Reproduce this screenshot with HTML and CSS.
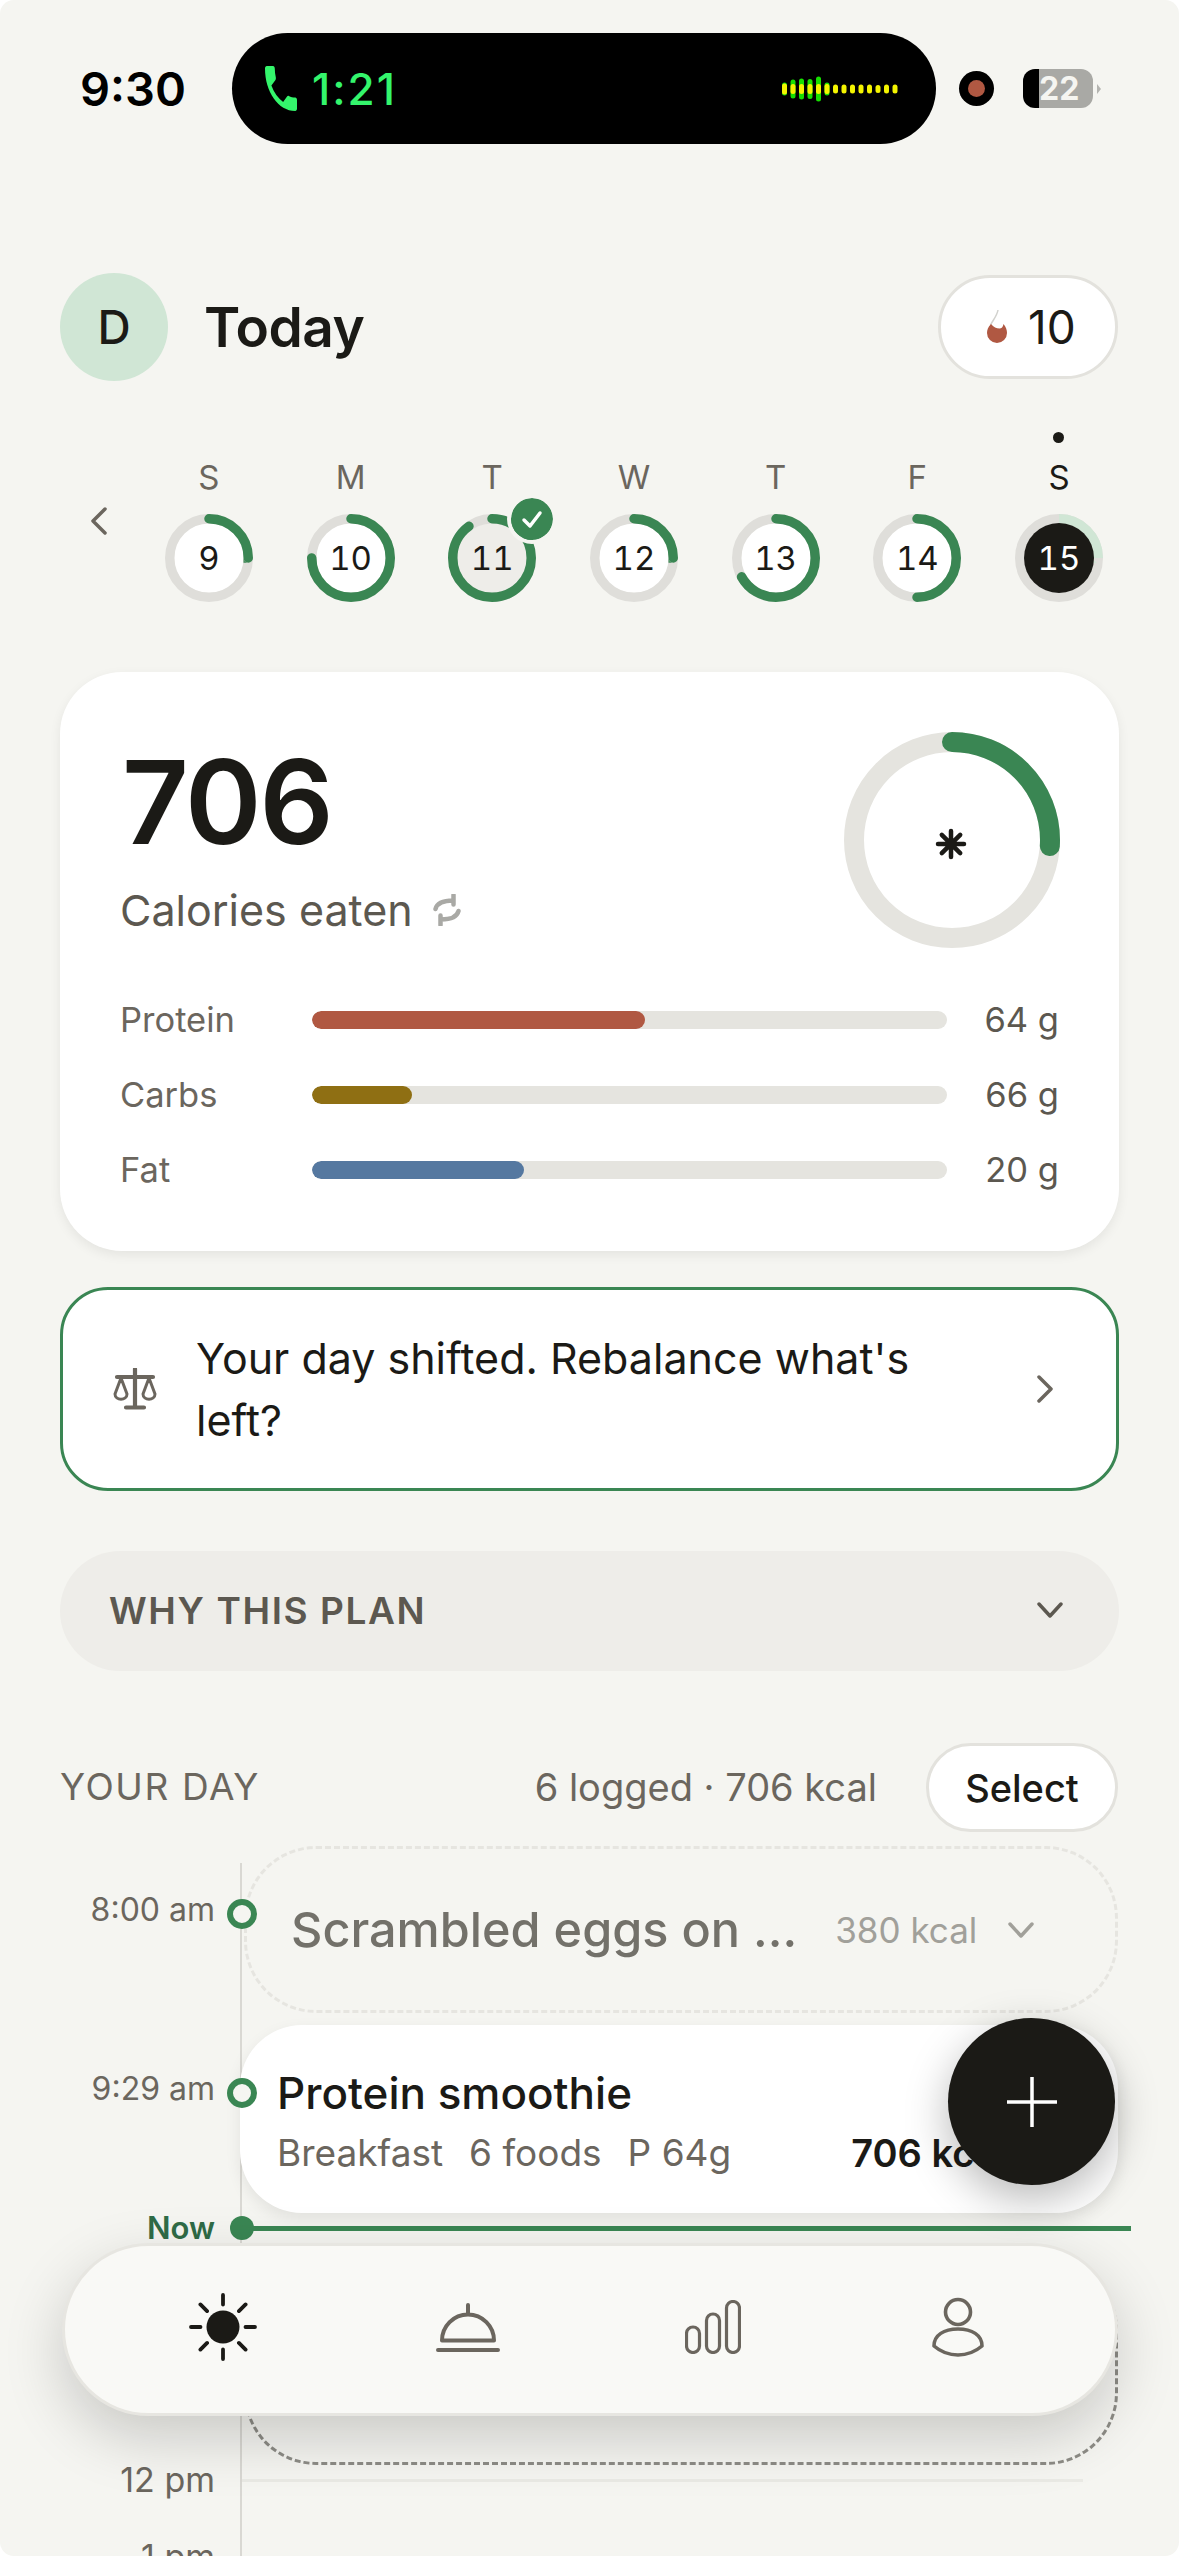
FILE: index.html
```html
<!DOCTYPE html>
<html lang="en">
  <head>
    <meta charset="utf-8">
    <title>Today</title>
    <link rel="stylesheet" href="styles.css">
  </head>
  <body>
    <div class="screen">

      <!-- Status bar -->
      <div class="status">
        <span class="status-time">9:30</span>
        <div class="island">
          <svg class="island-phone" viewBox="3 3 18 18" preserveAspectRatio="none"><path d="M6.6 10.8c1.4 2.8 3.8 5.1 6.6 6.6l2.2-2.2c.3-.3.7-.4 1-.2 1.1.4 2.3.6 3.6.6.6 0 1 .4 1 1V20c0 .6-.4 1-1 1C10.6 21 3 13.4 3 4c0-.6.4-1 1-1h3.5c.6 0 1 .4 1 1 0 1.2.2 2.4.6 3.6.1.3 0 .7-.2 1l-2.3 2.2z"/></svg>
          <span class="island-timer">1:21</span>
          <svg class="island-wave" viewBox="0 0 116 26">
            <g fill="#16e000">
              <rect x="0" y="6.5" width="5" height="13" rx="2.5"/>
              <rect x="8.5" y="3.5" width="5" height="19" rx="2.5"/>
              <rect x="17" y="2.500" width="5" height="21" rx="2.5"/>
              <rect x="25.500" y="3" width="5" height="20" rx="2.5"/>
              <rect x="34" y="0.500" width="5" height="25" rx="2.5"/>
              <rect x="42.500" y="6.500" width="5" height="13" rx="2.5"/>
            </g>
            <g fill="#f4f400">
              <rect x="0" y="7.500" width="5" height="11" rx="2.5"/>
              <rect x="8.500" y="8" width="5" height="10" rx="2.5"/>
              <rect x="17" y="8" width="5" height="10" rx="2.5"/>
              <rect x="25.500" y="8" width="5" height="10" rx="2.5"/>
              <rect x="34" y="8" width="5" height="10" rx="2.5"/>
              <rect x="42.500" y="8" width="5" height="10" rx="2.5"/>
              <rect x="51" y="8.500" width="5" height="9" rx="2.5"/>
              <rect x="59.500" y="8.500" width="5" height="9" rx="2.5"/>
              <rect x="68" y="8.500" width="5" height="9" rx="2.5"/>
              <rect x="76.500" y="8.500" width="5" height="9" rx="2.5"/>
              <rect x="85" y="8.500" width="5" height="9" rx="2.5"/>
              <rect x="93.500" y="9" width="5" height="8" rx="2.5"/>
              <rect x="102" y="8.500" width="5" height="9" rx="2.5"/>
              <rect x="110.500" y="8.500" width="5" height="9" rx="2.5"/>
            </g>
          </svg>
        </div>
        <span class="record-dot"></span>
        <div class="battery">
          <span class="battery-low"></span>
          <span class="battery-rest">22</span>
          <span class="battery-nub"></span>
        </div>
      </div>

      <!-- Header -->
      <header class="top">
        <div class="avatar">D</div>
        <h1 class="top-title">Today</h1>
        <div class="streak">
          <svg class="streak-flame" viewBox="0 0 24 36">
            <path d="M13 1C12 7 8 11 5.500 16" fill="none" stroke="#d2d2ce" stroke-width="1.500"/>
            <path d="M6 15C3 18 2 21 2 24a10 10 0 0 0 20 0c0-3-1-6-3.500-9-.5 3-2 4.500-4 4.500-3 0-6-1.500-8.500-4.500z" fill="#b05842"/>
          </svg>
          <span>10</span>
        </div>
      </header>

      <!-- Week -->
      <div class="week">
        <svg class="week-back" viewBox="0 0 18 28"><path d="M15 2 L3 14 L15 26"/></svg>
        <div class="week-days">
          <div class="day">
            <span class="day-dot"></span>
            <span class="day-letter">S</span>
            <div class="day-ring">
              <svg viewBox="0 0 88 88"><circle class="ring-face" cx="44" cy="44" r="35"/><circle class="ring-track" cx="44" cy="44" r="39.250"/><circle class="ring-fill" cx="44" cy="44" r="39.250" pathLength="100" stroke-dasharray="25 100"/></svg>
              <span class="day-num">9</span>
            </div>
          </div>
          <div class="day">
            <span class="day-dot"></span>
            <span class="day-letter">M</span>
            <div class="day-ring">
              <svg viewBox="0 0 88 88"><circle class="ring-face" cx="44" cy="44" r="35"/><circle class="ring-track" cx="44" cy="44" r="39.250"/><circle class="ring-fill" cx="44" cy="44" r="39.250" pathLength="100" stroke-dasharray="75 100"/></svg>
              <span class="day-num">10</span>
            </div>
          </div>
          <div class="day day-done">
            <span class="day-dot"></span>
            <span class="day-letter">T</span>
            <div class="day-ring">
              <svg viewBox="0 0 88 88"><circle class="ring-face" cx="44" cy="44" r="35"/><circle class="ring-track" cx="44" cy="44" r="39.250"/><circle class="ring-fill" cx="44" cy="44" r="39.250" pathLength="100" stroke-dasharray="90 100"/></svg>
              <span class="day-num">11</span>
              <svg class="day-check" viewBox="0 0 42 42"><circle cx="21" cy="21" r="21" fill="#3a8653"/><path d="M13 22 L19 28 L29 15" fill="none" stroke="#fff" stroke-width="3.500" stroke-linecap="round" stroke-linejoin="round"/></svg>
            </div>
          </div>
          <div class="day">
            <span class="day-dot"></span>
            <span class="day-letter">W</span>
            <div class="day-ring">
              <svg viewBox="0 0 88 88"><circle class="ring-face" cx="44" cy="44" r="35"/><circle class="ring-track" cx="44" cy="44" r="39.250"/><circle class="ring-fill" cx="44" cy="44" r="39.250" pathLength="100" stroke-dasharray="25 100"/></svg>
              <span class="day-num">12</span>
            </div>
          </div>
          <div class="day">
            <span class="day-dot"></span>
            <span class="day-letter">T</span>
            <div class="day-ring">
              <svg viewBox="0 0 88 88"><circle class="ring-face" cx="44" cy="44" r="35"/><circle class="ring-track" cx="44" cy="44" r="39.250"/><circle class="ring-fill" cx="44" cy="44" r="39.250" pathLength="100" stroke-dasharray="67 100"/></svg>
              <span class="day-num">13</span>
            </div>
          </div>
          <div class="day">
            <span class="day-dot"></span>
            <span class="day-letter">F</span>
            <div class="day-ring">
              <svg viewBox="0 0 88 88"><circle class="ring-face" cx="44" cy="44" r="35"/><circle class="ring-track" cx="44" cy="44" r="39.250"/><circle class="ring-fill" cx="44" cy="44" r="39.250" pathLength="100" stroke-dasharray="50 100"/></svg>
              <span class="day-num">14</span>
            </div>
          </div>
          <div class="day day-today">
            <span class="day-dot"></span>
            <span class="day-letter">S</span>
            <div class="day-ring">
              <svg viewBox="0 0 88 88"><circle class="ring-track" cx="44" cy="44" r="39.250"/><circle class="ring-fill" cx="44" cy="44" r="39.250" pathLength="100" stroke-dasharray="25 100"/><circle class="ring-face" cx="44" cy="44" r="35"/></svg>
              <span class="day-num">15</span>
            </div>
          </div>
        </div>
      </div>

      <!-- Calories card -->
      <section class="summary">
        <div class="summary-top">
          <div>
            <div class="summary-value">706</div>
            <div class="summary-label">
              Calories eaten
              <svg class="summary-sync" viewBox="0 0 30 32"><path d="M3.500 15C5 9 10 6.500 21 6.500M21.500 1V10.500M26.500 17C25 23 20 25.500 9 25.500M8.500 31V21.500"/></svg>
            </div>
          </div>
          <svg class="summary-ring" viewBox="0 0 216 216">
            <circle class="big-track" cx="108" cy="108" r="98"/>
            <circle class="big-fill" cx="108" cy="108" r="98" pathLength="100" stroke-dasharray="26 100"/>
            <g class="big-star">
              <path d="M107 99V125M94 112H120M97.800 102.800L116.200 121.200M116.200 102.800L97.800 121.200"/>
            </g>
          </svg>
        </div>
        <div class="macros">
          <div class="macro">
            <span class="macro-name">Protein</span>
            <div class="macro-bar"><div class="macro-fill fill-protein" style="width: 52.500%"></div></div>
            <span class="macro-value">64 g</span>
          </div>
          <div class="macro">
            <span class="macro-name">Carbs</span>
            <div class="macro-bar"><div class="macro-fill fill-carbs" style="width: 15.800%"></div></div>
            <span class="macro-value">66 g</span>
          </div>
          <div class="macro">
            <span class="macro-name">Fat</span>
            <div class="macro-bar"><div class="macro-fill fill-fat" style="width: 33.400%"></div></div>
            <span class="macro-value">20 g</span>
          </div>
        </div>
      </section>

      <!-- Rebalance -->
      <div class="banner">
        <svg class="banner-icon" viewBox="0 0 46 42">
          <path d="M23 1V39M5 9H41M14 39.500H32" stroke-width="4.200"/>
          <path d="M9 10L3 26C3 33 15 33 15 26ZM37 10L31 26C31 33 43 33 43 26Z" stroke-width="3"/>
        </svg>
        <p class="banner-text">Your day shifted. Rebalance what's left?</p>
        <svg class="banner-arrow" viewBox="0 0 18 28"><path d="M3 2 L15 14 L3 26"/></svg>
      </div>

      <div class="why">
        <span>WHY THIS PLAN</span>
        <svg class="why-arrow" viewBox="0 0 26 16"><path d="M2 2 L13 14 L24 2"/></svg>
      </div>

      <!-- Your day -->
      <div class="day-head">
        <span class="day-head-title">YOUR DAY</span>
        <span class="day-head-meta">6 logged · 706 kcal</span>
        <button class="select-btn">Select</button>
      </div>

      <div class="timeline">
        <div class="tl-row">
          <div class="tl-time"><span>8:00 am</span><i class="tl-dot"></i></div>
          <div class="ghost">
            <span class="ghost-name">Scrambled eggs on ...</span>
            <span class="ghost-kcal">380 kcal</span>
            <svg class="ghost-arrow" viewBox="0 0 26 16"><path d="M2 2 L13 14 L24 2"/></svg>
          </div>
        </div>

        <div class="tl-row tl-row-meal">
          <div class="tl-time"><span>9:29 am</span><i class="tl-dot"></i></div>
          <div class="meal">
            <div class="meal-name">Protein smoothie</div>
            <div class="meal-sub">
              <div class="meal-tags"><span>Breakfast</span><span>6 foods</span><span>P 64g</span></div>
              <strong class="meal-kcal">706 kcal</strong>
            </div>
          </div>
        </div>

        <div class="now">
          <span class="now-label">Now</span>
          <i class="now-dot"></i>
          <span class="now-line"></span>
        </div>

        <div class="planned"></div>

        <div class="hour"><span class="hour-label">12 pm</span><span class="hour-line"></span></div>
        <div class="hour hour-next"><span class="hour-label">1 pm</span><span class="hour-line"></span></div>
      </div>

      <!-- Floating stuff -->
      <button class="fab"><svg viewBox="0 0 50 50"><path d="M25 0V50M0 25H50"/></svg></button>

      <nav class="tabs">
        <div class="tab">
          <svg class="tab-sun" viewBox="0 0 68 68">
            <circle cx="34" cy="34" r="16.500"/>
            <path d="M34 2V11.500M34 56.500V66M2 34H11.500M56.500 34H66M11.400 11.400L18.100 18.100M49.900 49.900L56.600 56.600M56.600 11.400L49.900 18.100M18.100 49.900L11.400 56.600"/>
          </svg>
        </div>
        <div class="tab">
          <svg class="tab-bell" viewBox="0 0 66 50">
            <path d="M33 3V11M7 38.500A26 26 0 0 1 59 38.500ZM3 48H63"/>
          </svg>
        </div>
        <div class="tab">
          <svg class="tab-bars" viewBox="0 0 56 54">
            <rect x="1.500" y="27" width="13" height="25.500" rx="6.500"/>
            <rect x="21.500" y="14" width="13" height="38.500" rx="6.500"/>
            <rect x="41.500" y="1.500" width="13" height="51" rx="6.500"/>
          </svg>
        </div>
        <div class="tab">
          <svg class="tab-user" viewBox="0 0 54 60">
            <circle cx="27" cy="15" r="12.500"/>
            <path d="M3 49C3 38 13 32 27 32C41 32 51 38 51 49C44 55 36 58 27 58C18 58 10 55 3 49Z"/>
          </svg>
        </div>
      </nav>
    </div>
  </body>
</html>
```

FILE: styles.css
```css
/* Base */
* {
  box-sizing: border-box;
}

body {
  margin: 0;
  background: #fff;
  font-family: Inter, "Noto Sans", sans-serif;
  color: #1b1a16;
}

.screen {
  position: relative;
  width: 1179px;
  height: 2556px;
  padding-top: 33px;
  overflow: hidden;
  background: #f5f5f1;
  border-radius: 14px;
}

/* Status bar */
.status {
  display: flex;
  align-items: center;
  height: 111px;
  padding-left: 80px;
}

.status-time {
  width: 152px;
  font-size: 47px;
  font-weight: 600;
  color: #000;
}

.island {
  display: flex;
  align-items: center;
  width: 704px;
  height: 111px;
  padding-left: 33px;
  background: #000;
  border-radius: 56px;
}

.island-phone {
  width: 32px;
  height: 45px;
  fill: #34f56c;
}

.island-timer {
  margin-left: 15px;
  font-size: 44px;
  font-weight: 500;
  letter-spacing: 2px;
  color: #34f56c;
}

.island-wave {
  width: 116px;
  height: 26px;
  margin-left: auto;
  margin-right: 38px;
}

.record-dot {
  width: 35px;
  height: 35px;
  margin-left: 23px;
  background: #000;
  border-radius: 50%;
  display: flex;
  align-items: center;
  justify-content: center;
}

.record-dot::after {
  content: "";
  width: 17px;
  height: 17px;
  background: #b05842;
  border-radius: 50%;
}

.battery {
  display: flex;
  align-items: center;
  margin-left: 29px;
  height: 39px;
}

.battery-low {
  width: 16px;
  height: 39px;
  background: #000;
  border-radius: 12px 0 0 12px;
}

.battery-rest {
  width: 54px;
  height: 39px;
  background: #a9a9a5;
  border-radius: 0 12px 12px 0;
  font-size: 32px;
  font-weight: 700;
  line-height: 39px;
  color: #f5f5f1;
}

.battery-nub {
  width: 0;
  height: 0;
  margin-left: 4px;
  border-left: 4px solid #b4b4b0;
  border-top: 5px solid transparent;
  border-bottom: 5px solid transparent;
}

/* Header */
.top {
  display: flex;
  align-items: center;
  margin-top: 129px;
  padding: 0 61px 0 60px;
}

.avatar {
  display: flex;
  align-items: center;
  justify-content: center;
  width: 108px;
  height: 108px;
  background: #d0e6d5;
  border-radius: 50%;
  font-size: 46px;
  font-weight: 500;
}

.top-title {
  margin: 0 0 0 36px;
  font-size: 55px;
  font-weight: 600;
  letter-spacing: -0.5px;
}

.streak {
  display: flex;
  align-items: center;
  gap: 19px;
  height: 104px;
  margin-left: auto;
  padding-left: 44px;
  width: 180px;
  background: #fff;
  border: 3px solid #e3e2dd;
  border-radius: 52px;
  font-size: 46px;
}

.streak-flame {
  width: 24px;
  height: 36px;
}

/* Week */
.week {
  display: flex;
  align-items: flex-start;
  margin-top: 51px;
  padding-left: 90px;
}

.week-back {
  width: 18px;
  height: 28px;
  margin-top: 75px;
  fill: none;
  stroke: #6b665e;
  stroke-width: 3.500;
  stroke-linecap: round;
  stroke-linejoin: round;
}

.week-days {
  display: grid;
  grid-template-columns: repeat(7, 141.700px);
  margin-left: 30px;
}

.day {
  display: flex;
  flex-direction: column;
  align-items: center;
}

.day-dot {
  width: 11px;
  height: 11px;
  border-radius: 50%;
}

.day-today .day-dot {
  background: #1b1a16;
}

.day-letter {
  margin-top: 14px;
  font-size: 33px;
  line-height: 40px;
  color: #6b665e;
}

.day-today .day-letter {
  color: #1b1a16;
}

.day-ring {
  position: relative;
  width: 88px;
  height: 88px;
  margin-top: 17px;
}

.day-ring > svg:first-child {
  display: block;
  width: 88px;
  height: 88px;
  transform: rotate(-90deg);
}

.ring-face {
  fill: #fff;
}

.ring-track {
  fill: none;
  stroke: #dfdeda;
  stroke-width: 9.500px;
}

.ring-fill {
  fill: none;
  stroke: #3a8653;
  stroke-width: 9.500px;
  stroke-linecap: round;
}

.day-num {
  position: absolute;
  inset: 0;
  display: flex;
  align-items: center;
  justify-content: center;
  font-size: 33px;
  font-variant-numeric: tabular-nums;
}

.day-done .ring-face {
  fill: #eeede9;
}

.day-check {
  position: absolute;
  left: 63px;
  top: -16px;
  width: 42px;
  height: 42px;
  border-radius: 50%;
  box-shadow: 0 0 0 4px #f5f5f1;
}

.day-today .ring-face {
  fill: #1b1a16;
}

.day-today .ring-fill {
  stroke: #d0e6d5;
  stroke-linecap: butt;
}

.day-today .day-num {
  color: #fff;
}

/* Calories card */
.summary {
  height: 579px;
  margin: 70px 60px 0;
  padding: 60px 60px 0 60px;
  background: #fff;
  border-radius: 62px;
  box-shadow: 0 4px 12px rgba(0, 0, 0, 0.07);
}

.summary-top {
  display: flex;
  justify-content: space-between;
}

.summary-value {
  margin-top: 12px;
  margin-left: 2px;
  font-size: 116px;
  font-weight: 600;
  line-height: 116px;
  letter-spacing: -2px;
}

.summary-label {
  display: flex;
  align-items: center;
  margin-top: 20px;
  font-size: 43px;
  line-height: 60px;
  color: #5c5850;
}

.summary-sync {
  width: 30px;
  height: 32px;
  margin-left: 19px;
  fill: none;
  stroke: #a9a9a5;
  stroke-width: 4.500;
  stroke-linecap: round;
}

.summary-ring {
  width: 216px;
  height: 216px;
  margin-right: -1px;
}

.big-track {
  fill: none;
  stroke: #e5e4df;
  stroke-width: 20px;
}

.big-fill {
  fill: none;
  stroke: #3a8653;
  stroke-width: 20px;
  stroke-linecap: round;
  transform: rotate(-90deg);
  transform-origin: 108px 108px;
}

.big-star {
  fill: none;
  stroke: #1b1a16;
  stroke-width: 4.500;
  stroke-linecap: round;
}

.macros {
  margin-top: 34px;
}

.macro {
  display: flex;
  align-items: center;
  height: 75px;
}

.macro-name {
  width: 192px;
  font-size: 34.500px;
  color: #6b665e;
}

.macro-bar {
  flex: 1;
  height: 18px;
  background: #e5e4df;
  border-radius: 9px;
  overflow: hidden;
}

.macro-fill {
  height: 18px;
  border-radius: 9px;
}

.fill-protein {
  background: #b05842;
}

.fill-carbs {
  background: #8f6f13;
}

.fill-fat {
  background: #5578a0;
}

.macro-value {
  width: 112px;
  font-size: 34.500px;
  text-align: right;
  color: #5c5850;
}

/* Rebalance */
.banner {
  display: flex;
  align-items: center;
  height: 204px;
  margin: 36px 60px 0;
  padding: 0 62px 0 49px;
  background: #fff;
  border: 3px solid #3a8653;
  border-radius: 48px;
}

.banner-icon {
  flex: none;
  width: 46px;
  height: 42px;
  fill: none;
  stroke: #6b665e;
  stroke-linecap: round;
  stroke-linejoin: round;
}

.banner-text {
  width: 760px;
  margin: 0 0 0 38px;
  font-size: 43px;
  line-height: 62px;
}

.banner-arrow {
  flex: none;
  width: 18px;
  height: 28px;
  margin-left: auto;
  fill: none;
  stroke: #6b665e;
  stroke-width: 3.500;
  stroke-linecap: round;
  stroke-linejoin: round;
}

.why {
  display: flex;
  align-items: center;
  justify-content: space-between;
  height: 120px;
  margin: 60px 60px 0;
  padding: 0 56px 2px 49px;
  background: #eeede9;
  border-radius: 60px;
  font-size: 37px;
  font-weight: 600;
  letter-spacing: 1.600px;
  color: #5c5850;
}

.why-arrow {
  width: 26px;
  height: 16px;
  fill: none;
  stroke: #5c5850;
  stroke-width: 3.500;
  stroke-linecap: round;
  stroke-linejoin: round;
}

/* Your day */
.day-head {
  display: flex;
  align-items: center;
  margin: 72px 61px 0 60px;
}

.day-head-title {
  padding-bottom: 2px;
  font-size: 37px;
  font-weight: 400;
  letter-spacing: 1.600px;
  color: #6b665e;
}

.day-head-meta {
  margin-left: auto;
  padding-bottom: 2px;
  font-size: 38px;
  color: #6b665e;
}

.select-btn {
  width: 192px;
  height: 89px;
  margin-left: 49px;
  padding: 0;
  background: #fff;
  border: 3px solid #e3e2dd;
  border-radius: 45px;
  font-family: inherit;
  font-size: 38px;
  font-weight: 500;
  color: #1b1a16;
}

/* Timeline */
.timeline {
  position: relative;
  margin-top: 14px;
}

.timeline::before {
  content: "";
  position: absolute;
  left: 240px;
  top: 17px;
  bottom: 0;
  width: 2px;
  background: #d9d8d3;
}

.tl-row {
  position: relative;
  display: flex;
  align-items: flex-start;
  padding-left: 60px;
  padding-right: 61px;
}

.tl-row-meal {
  margin-top: 12px;
}

.tl-time {
  position: relative;
  z-index: 2;
  flex: none;
  display: flex;
  align-items: center;
  justify-content: flex-end;
  gap: 12px;
  width: 180px;
  margin-top: 53px;
  font-size: 32px;
  color: #6b665e;
}

.tl-time span {
  margin-top: -10px;
}

.tl-dot {
  flex: none;
  width: 30px;
  height: 30px;
  margin-right: -17px;
  background: #f5f5f1;
  border: 6px solid #3a8653;
  border-radius: 50%;
}

.ghost {
  display: flex;
  align-items: center;
  flex: 1;
  height: 167px;
  margin-left: 4px;
  padding-left: 44px;
  border: 3px dashed #e6e5e0;
  border-radius: 72px;
}

.ghost-name {
  font-size: 48.600px;
  font-weight: 500;
  color: #73716a;
}

.ghost-kcal {
  margin-left: 38px;
  font-size: 35px;
  color: #a1a09a;
}

.ghost-arrow {
  width: 26px;
  height: 16px;
  margin-left: 31px;
  fill: none;
  stroke: #a1a09a;
  stroke-width: 3.500;
  stroke-linecap: round;
  stroke-linejoin: round;
}

.meal {
  flex: 1;
  height: 188px;
  padding: 38px 0 0 37px;
  background: #fff;
  border-radius: 62px;
  box-shadow: 0 6px 16px rgba(0, 0, 0, 0.08);
}

.meal-name {
  font-size: 44px;
  font-weight: 500;
  line-height: 60px;
}

.meal-sub {
  display: flex;
  align-items: center;
  margin-top: 5px;
  line-height: 50px;
}

.meal-tags {
  display: flex;
  gap: 26px;
  font-size: 37px;
  color: #6b665e;
}

.meal-kcal {
  margin-left: 120px;
  font-size: 38px;
  font-weight: 600;
}

.now {
  position: relative;
  z-index: 2;
  display: flex;
  align-items: center;
  height: 24px;
  margin-top: 3px;
  padding: 0 48px 0 60px;
}

.now-label {
  width: 155px;
  padding-bottom: 2px;
  font-size: 31px;
  font-weight: 600;
  text-align: right;
  color: #2f6b46;
}

.now-dot {
  flex: none;
  width: 24px;
  height: 24px;
  margin-left: 15px;
  background: #3a8653;
  border-radius: 50%;
}

.now-line {
  flex: 1;
  height: 5px;
  margin-left: -12px;
  background: #3a8653;
}

.planned {
  height: 207px;
  margin: 18px 61px 0 244px;
  border: 3px dashed #8d8c86;
  border-radius: 72px;
}

.hour {
  display: flex;
  align-items: center;
  height: 30px;
  padding: 0 96px 0 60px;
}

.hour-next {
  margin-top: 47px;
}

.hour-label {
  flex: none;
  width: 155px;
  padding-bottom: 2px;
  font-size: 34px;
  text-align: right;
  color: #6b665e;
}

.hour-line {
  flex: 1;
  height: 3px;
  margin-left: 26px;
  background: #eaeae5;
}

/* Floating add button */
.fab {
  position: absolute;
  z-index: 4;
  left: 948px;
  top: 2018px;
  display: flex;
  align-items: center;
  justify-content: center;
  width: 167px;
  height: 167px;
  padding: 0;
  background: #1b1a16;
  border: 0;
  border-radius: 50%;
  box-shadow: 0 14px 44px rgba(0, 0, 0, 0.28);
}

.fab svg {
  width: 50px;
  height: 50px;
  fill: none;
  stroke: #fff;
  stroke-width: 3.500;
}

/* Tab bar */
.tabs {
  position: absolute;
  z-index: 3;
  left: 62px;
  top: 2243px;
  display: grid;
  grid-template-columns: repeat(4, 245px);
  align-items: center;
  width: 1056px;
  height: 173px;
  padding: 0 35px;
  background: #f9f9f6;
  border: 3px solid #e7e6e1;
  border-radius: 87px;
  box-shadow: 0 22px 60px rgba(0, 0, 0, 0.18);
}

.tab {
  display: flex;
  justify-content: center;
  margin-top: -5px;
}

.tab-sun {
  width: 68px;
  height: 68px;
  fill: #1b1a16;
  stroke: #1b1a16;
  stroke-width: 0;
}

.tab-sun path {
  fill: none;
  stroke-width: 3.800;
  stroke-linecap: round;
}

.tab-bell {
  width: 66px;
  height: 50px;
  fill: none;
  stroke: #6b665e;
  stroke-width: 4;
  stroke-linecap: round;
  stroke-linejoin: round;
}

.tab-bars {
  width: 56px;
  height: 54px;
  fill: none;
  stroke: #6b665e;
  stroke-width: 3.200;
}

.tab-user {
  width: 54px;
  height: 60px;
  fill: none;
  stroke: #6b665e;
  stroke-width: 3.600;
  stroke-linejoin: round;
}
```
